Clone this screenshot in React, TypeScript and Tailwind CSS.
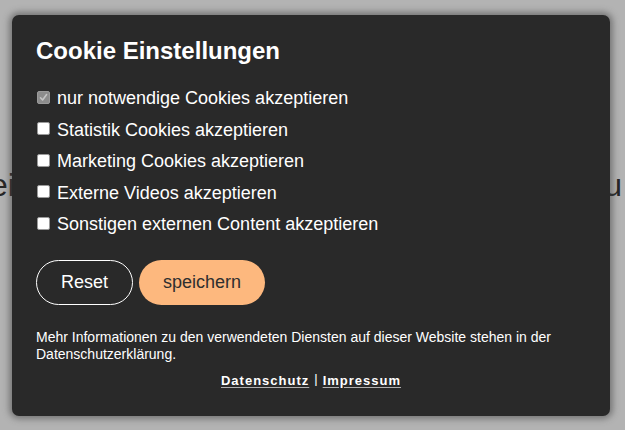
const OPTIONS = [
  { label: "nur notwendige Cookies akzeptieren", locked: true },
  { label: "Statistik Cookies akzeptieren", locked: false },
  { label: "Marketing Cookies akzeptieren", locked: false },
  { label: "Externe Videos akzeptieren", locked: false },
  { label: "Sonstigen externen Content akzeptieren", locked: false },
];

function Box({ locked }: { locked: boolean }) {
  if (locked) {
    return (
      <span className="w-[13px] h-[13px] rounded-[2px] bg-[#8c8c8c] border border-[#9a9a9a] flex items-center justify-center shrink-0">
        <svg width="9" height="9" viewBox="0 0 9 9" fill="none">
          <path d="M1.5 4.8 L3.6 7 L7.6 1.6" stroke="#c4c4c4" strokeWidth="1.6" strokeLinecap="round" strokeLinejoin="round" />
        </svg>
      </span>
    );
  }
  return <span className="block w-[13px] h-[13px] rounded-[2px] bg-white border border-[#9a9a9a] shrink-0" />;
}

export default function App() {
  return (
    <div className="relative w-[625px] h-[430px] overflow-hidden bg-[#b3b3b3] font-['Liberation_Sans',Arial,sans-serif]">
      {/* page behind the overlay */}
      <div className="flex justify-between items-center pt-[165px] text-[32px] leading-[40px] text-[#262626]">
        <span className="-ml-[10px]">ei</span>
        <span className="mr-[3px]">u</span>
      </div>

      {/* cookie dialog */}
      <div className="absolute left-[12px] top-[15px] w-[598px] h-[401px] rounded-[7px] bg-[#292929] shadow-[0_0_6px_3px_rgba(70,70,70,0.55)] pl-[24px] pr-[24px] pt-[22px] text-white">
        <h2 className="text-[24px] leading-[28px] font-bold">Cookie Einstellungen</h2>

        <div className="mt-[18px] flex flex-col">
          {OPTIONS.map((o) => (
            <label key={o.label} className="h-[31.5px] flex items-center gap-[7px] text-[18px] pl-[1px]">
              <span className="-mt-[3px]">
                <Box locked={o.locked} />
              </span>
              <span>{o.label}</span>
            </label>
          ))}
        </div>

        <div className="mt-[19px] flex gap-[6px]">
          <button className="h-[45px] px-[24px] rounded-full border border-white text-[18px] text-white">
            Reset
          </button>
          <button className="h-[45px] px-[24px] rounded-full bg-[#fdb87e] text-[18px] text-[#2f2f2f]">
            speichern
          </button>
        </div>

        <p className="mt-[24px] text-[14px] leading-[17px]">
          Mehr Informationen zu den verwendeten Diensten auf dieser Website stehen in der Datenschutzerklärung.
        </p>

        <div className="mt-[9px] flex justify-center items-center gap-[5px] text-[13px] leading-[17px] font-bold tracking-[1px]">
          <a className="underline decoration-[#b0b0b0] underline-offset-2">Datenschutz</a>
          <span className="font-normal -mt-[4px] tracking-normal">|</span>
          <a className="underline decoration-[#b0b0b0] underline-offset-2">Impressum</a>
        </div>
      </div>
    </div>
  );
}
